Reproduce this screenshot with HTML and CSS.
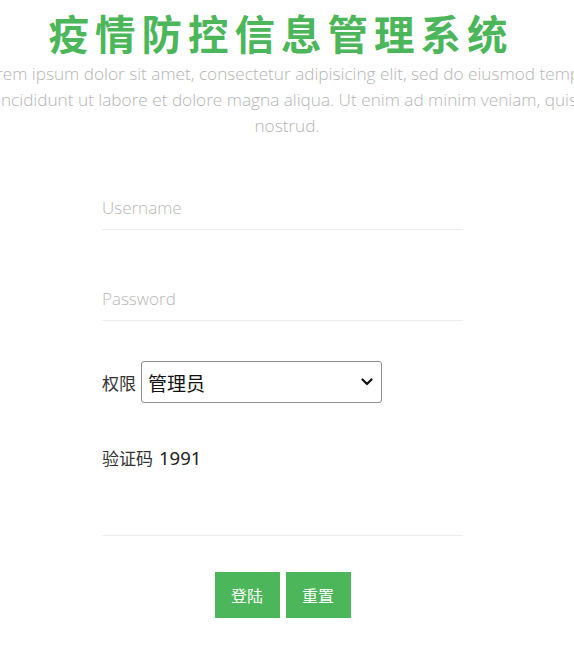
FILE: index.html
```html
<!DOCTYPE html>
<html lang="zh">
<head>
<meta charset="utf-8">
<title>疫情防控信息管理系统</title>
<link rel="stylesheet" href="styles.css">
</head>
<body>
<div class="page">
  <h1 class="title">疫情防控信息管理系统</h1>
  <p class="intro">Lorem ipsum dolor sit amet, consectetur adipisicing elit, sed do eiusmod tempor incididunt ut labore et dolore magna aliqua. Ut enim ad minim veniam, quis nostrud.</p>
  <form class="login">
    <input class="field" type="text" placeholder="Username">
    <input class="field" type="password" placeholder="Password">
    <div class="role">
      <label class="label">权限</label>
      <span class="select-wrap">
        <select class="select">
          <option>管理员</option>
          <option>用户</option>
        </select>
        <svg class="chevron" width="12" height="8" viewBox="0 0 12 8"><path d="M1.5 1.5 L6 6 L10.5 1.5" fill="none" stroke="#111" stroke-width="2.2" stroke-linecap="round" stroke-linejoin="round"/></svg>
      </span>
    </div>
    <div class="captcha"><span class="label">验证码</span> <span class="code">1991</span></div>
    <input class="field code-input" type="text">
    <div class="actions">
      <button class="btn" type="button">登陆</button>
      <button class="btn" type="reset">重置</button>
    </div>
  </form>
</div>
</body>
</html>
```

FILE: styles.css
```css
html, body {
  margin: 0;
  padding: 0;
  background: #fff;
  overflow-x: hidden;
}
body {
  font-family: "Noto Sans", "Noto Sans CJK SC", sans-serif;
}
.page {
  width: 574px;
}
.title {
  margin: 8px 0 0;
  text-align: center;
  font-family: "Noto Sans CJK SC", sans-serif;
  font-size: 40.5px;
  font-weight: 700;
  line-height: 50px;
  letter-spacing: 6px;
  padding-right: 12px;
  color: #4cb65a;
}
.intro {
  width: 640px;
  margin: 3px 0 0 -33px;
  text-align: center;
  font-family: "Open Sans", "Noto Sans CJK SC", sans-serif;
  font-weight: 300;
  font-size: 17.2px;
  line-height: 26px;
  color: #b5b5b5;
}
.login {
  width: 361px;
  margin: 47px 0 0 102px;
  display: flex;
  flex-direction: column;
}
.field {
  display: block;
  width: 100%;
  box-sizing: border-box;
  height: 44px;
  padding: 0;
  border: none;
  border-bottom: 1px solid #eeeeee;
  outline: none;
  font-family: "Open Sans", sans-serif;
  font-weight: 300;
  font-size: 17px;
  color: #333;
  background: transparent;
}
.field::placeholder {
  color: #b8b8b8;
}
.field + .field {
  margin-top: 47px;
}
.role {
  display: flex;
  align-items: center;
  gap: 5px;
  margin-top: 40px;
}
.label {
  font-family: "Noto Sans CJK SC", sans-serif;
  font-size: 17px;
  color: #333;
}
.select-wrap {
  position: relative;
  display: block;
  width: 241px;
  height: 42px;
}
.select {
  appearance: none;
  -webkit-appearance: none;
  display: block;
  width: 100%;
  height: 100%;
  box-sizing: border-box;
  border: 1px solid #8f8f8f;
  border-radius: 3px;
  background: #fff;
  font-family: "Noto Sans CJK SC", sans-serif;
  font-size: 19px;
  color: #111;
  padding: 0 30px 0 6px;
  outline: none;
}
.chevron {
  position: absolute;
  right: 9px;
  top: 17px;
  pointer-events: none;
}
.captcha {
  margin-top: 42px;
  display: flex;
  align-items: center;
  gap: 6px;
  line-height: 26px;
}
.code {
  font-family: "Noto Sans", sans-serif;
  font-size: 18.5px;
  color: #222;
}
.code-input {
  margin-top: 21px;
  height: 44px;
}
.actions {
  display: flex;
  justify-content: center;
  gap: 6px;
  margin-top: 36px;
}
.btn {
  width: 65px;
  height: 46px;
  border: none;
  background: #4cb65a;
  color: #fff;
  font-family: "Noto Sans CJK SC", sans-serif;
  font-size: 16px;
  padding: 0;
  cursor: pointer;
}
```
